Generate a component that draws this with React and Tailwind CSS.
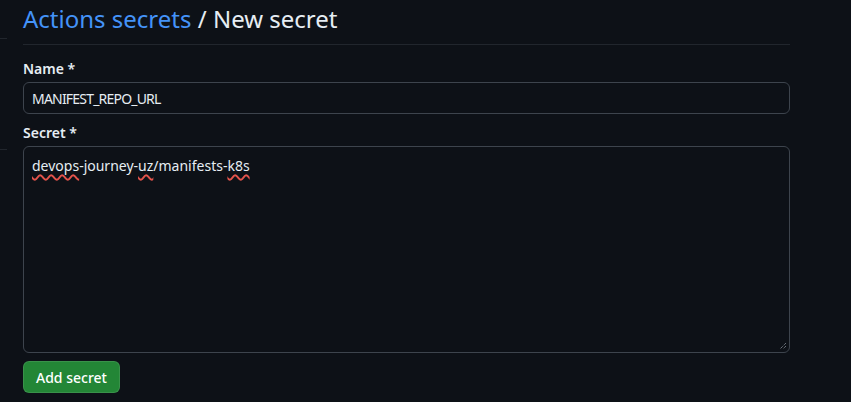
import React from "react";

const App = () => {
  return (
    <div
      className="min-h-[402px] w-[851px] bg-[#0d1117] text-[#e6edf3] flex"
      style={{ fontFamily: '"Noto Sans", "Liberation Sans", sans-serif' }}
    >
      {/* edge of the sidebar, mostly off-screen */}
      <div className="w-[7px] shrink-0">
        <div className="h-[39px] border-b border-[#21262d]" />
        <div className="h-[111px] border-b border-[#21262d]" />
      </div>

      <div className="w-[767px] ml-[16px]">
        <div className="pt-[2px] pb-[8px] border-b border-[#21262d]">
          <h1 className="text-[24px] leading-[34px] font-normal">
            <a className="text-[#4493f8]">Actions secrets</a>
            <span> / New secret</span>
          </h1>
        </div>

        <form className="pt-[13px]">
          <label className="block text-[14px] leading-[21px] font-semibold mb-[3px]">
            Name *
          </label>
          <input
            type="text"
            defaultValue="MANIFEST_REPO_URL"
            className="block w-full h-[32px] px-[8px] text-[14px] tracking-[-0.8px] bg-[#0d1117] text-[#e6edf3] border border-[#3d444d] rounded-[6px] outline-none"
          />

          <label className="block text-[14px] leading-[21px] font-semibold mt-[8px] mb-[3px]">
            Secret *
          </label>
          <div className="relative h-[207px] w-full border border-[#3d444d] rounded-[6px] px-[8px] pt-[9px] text-[14px] leading-[20px]">
            <span className="underline decoration-wavy decoration-[#e5534b] underline-offset-[3px] decoration-[1.5px]">
              devops
            </span>
            -journey-
            <span className="underline decoration-wavy decoration-[#e5534b] underline-offset-[3px] decoration-[1.5px]">
              uz
            </span>
            /manifests-
            <span className="underline decoration-wavy decoration-[#e5534b] underline-offset-[3px] decoration-[1.5px]">
              k8s
            </span>
            <svg
              className="absolute right-[2px] bottom-[2px]"
              width="8"
              height="8"
              viewBox="0 0 8 8"
            >
              <path d="M7 1L1 7M7 4L4 7" stroke="#9198a1" strokeWidth="1" strokeDasharray="1 1" />
            </svg>
          </div>

          <button
            type="button"
            className="mt-[8px] h-[32px] px-[12px] rounded-[6px] bg-[#238636] border border-[#ffffff1a] text-white text-[14px] font-medium"
          >
            Add secret
          </button>
        </form>
      </div>
    </div>
  );
};

export default App;
